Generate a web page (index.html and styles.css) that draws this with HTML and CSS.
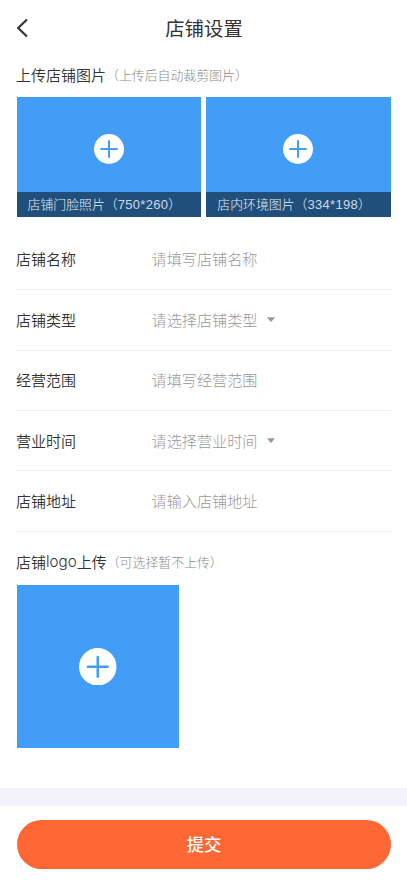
FILE: index.html
```html
<!DOCTYPE html>
<html lang="zh-CN">
<head>
<meta charset="utf-8">
<meta name="viewport" content="width=device-width">
<title>店铺设置</title>
<link rel="stylesheet" href="styles.css">
</head>
<body>
<header class="header">
  <svg class="back" viewBox="0 0 14 20"><path d="M11 1.5 2.2 10 11 18.5"/></svg>
  <h1 class="title">店铺设置</h1>
</header>
<main class="content">
  <h2 class="section-title">上传店铺图片<span class="hint">（上传后自动裁剪图片）</span></h2>
  <div class="photos">
    <div class="photo">
      <div class="photo-body"><svg class="plus" viewBox="0 0 30 30"><circle cx="15" cy="15" r="15"/><path d="M15 7.1v15.8M7.1 15h15.8"/></svg></div>
      <div class="caption">店铺门脸照片（<span class="size">750*260</span>）</div>
    </div>
    <div class="photo">
      <div class="photo-body"><svg class="plus" viewBox="0 0 30 30"><circle cx="15" cy="15" r="15"/><path d="M15 7.1v15.8M7.1 15h15.8"/></svg></div>
      <div class="caption">店内环境图片（<span class="size">334*198</span>）</div>
    </div>
  </div>
  <div class="form">
    <div class="row"><span class="label">店铺名称</span><span class="value">请填写店铺名称</span></div>
    <div class="row"><span class="label">店铺类型</span><span class="value">请选择店铺类型</span><svg class="arrow" viewBox="0 0 8 5"><path d="M0 .2h8L4.5 4.5q-.5.5-1 0z"/></svg></div>
    <div class="row"><span class="label">经营范围</span><span class="value">请填写经营范围</span></div>
    <div class="row"><span class="label">营业时间</span><span class="value">请选择营业时间</span><svg class="arrow" viewBox="0 0 8 5"><path d="M0 .2h8L4.5 4.5q-.5.5-1 0z"/></svg></div>
    <div class="row"><span class="label">店铺地址</span><span class="value">请输入店铺地址</span></div>
  </div>
  <h2 class="section-title logo-title">店铺<span class="latin">logo</span>上传<span class="hint">（可选择暂不上传）</span></h2>
  <div class="logo-upload"><svg class="plus plus-large" viewBox="0 0 30 30"><circle cx="15" cy="15" r="15"/><path d="M15 7.1v15.8M7.1 15h15.8"/></svg></div>
</main>
<footer class="footer"><button class="submit">提交</button></footer>
</body>
</html>
```
FILE: styles.css
```css
* { box-sizing: border-box; }
body {
  margin: 0;
  height: 883px;
  display: flex;
  flex-direction: column;
  overflow: hidden;
  background: #fff;
  color: #333;
  font-family: "Noto Sans CJK SC", sans-serif;
  font-size: 15px;
  font-weight: 300;
}
h1, h2 { margin: 0; }
.header {
  height: 56px;
  padding: 0 15.5px;
  display: grid;
  grid-template-columns: 14px 1fr 14px;
  align-items: center;
}
.back { width: 14px; height: 20px; fill: none; stroke: #333; stroke-width: 2.2; }
.title { padding: 0 0 1px 1px; text-align: center; font-size: 19.4px; line-height: 28px; font-weight: 400; }
.content { flex: 1; padding: 0 16.5px; }
.section-title {
  display: flex;
  align-items: center;
  height: 41px;
  padding-bottom: 4px;
  margin-left: -.5px;
  font-size: 15px;
  font-weight: 350;
  white-space: nowrap;
}
.hint { color: #8c8c8c; font-size: 12.9px; font-weight: 300; }
.photos { display: flex; gap: 5.5px; }
.photo { flex: 1; height: 119.5px; display: flex; flex-direction: column; background: #429df7; }
.photo-body { flex: 1; display: flex; align-items: center; justify-content: center; padding-top: 9px; }
.plus { width: 30px; height: 30px; }
.plus circle { fill: #fff; }
.plus path { stroke: #429df7; stroke-width: 2; stroke-linecap: round; }
.plus-large { width: 37.5px; height: 37.5px; }
.caption {
  height: 25px;
  padding-left: 11px;
  background: #214f7c;
  color: #e6eef5;
  font-size: 12.9px;
  line-height: 23px;
  white-space: nowrap;
}
.size { font-family: "Liberation Sans", sans-serif; font-size: 13px; letter-spacing: .3px; color: #cddae6; }
.form { padding-top: 13.3px; }
.row { display: flex; align-items: center; height: 60.4px; margin-left: -.5px; padding-bottom: 1px; border-bottom: 1px solid #eee; }
.label { width: 135.5px; font-weight: 350; }
.value { color: #999; font-size: 15.15px; padding-bottom: 1px; }
.arrow { width: 8px; height: 5px; margin: 1px 0 0 9.4px; fill: #999; }
.logo-title { height: 53.4px; padding: 6px 0 0; }
.latin { font-family: Inter, sans-serif; font-weight: 300; font-size: 15.2px; }
.logo-upload { width: 162.5px; height: 163px; display: flex; align-items: center; justify-content: center; background: #429df7; }
.footer { height: 95px; padding: 13.5px 16.5px; border-top: 18.5px solid #f3f4f9; }
.submit {
  display: block;
  width: 100%;
  height: 49px;
  padding: 0 0 2px 1px;
  border: 0;
  border-radius: 25px;
  background: #ff6735;
  color: #fff;
  font: 500 17.3px "Noto Sans CJK SC", sans-serif;
}
```
